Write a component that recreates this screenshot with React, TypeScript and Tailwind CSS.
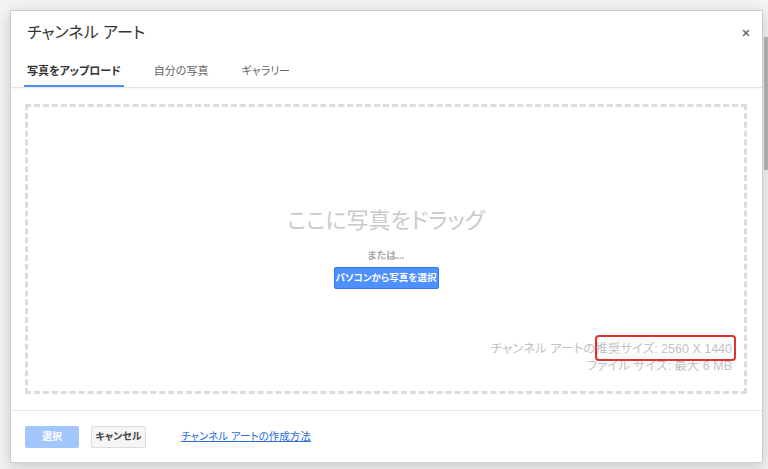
import { X } from "lucide-react";

const font = "font-['Liberation_Sans','Noto_Sans_CJK_JP',sans-serif] [font-feature-settings:'palt']";

export default function App() {
  return (
    <div className={`flex h-[469px] w-[768px] overflow-hidden bg-[#f3f3f3] ${font}`}>
      <div className="ml-[10px] mt-[10px] flex h-[453px] w-[754px] flex-col border border-[#cfcfcf] bg-white shadow-[0_4px_14px_rgba(0,0,0,0.18)]">
        {/* header */}
        <div className="border-b border-[#e5e5e5] shadow-[0_1px_3px_rgba(0,0,0,0.06)]">
          <div className="flex items-center justify-between pl-[16px] pr-[11px] pt-[12px]">
            <h1 className="text-[16px] leading-[20px] text-[#333]">チャンネル アート</h1>
            <X className="h-[10px] w-[10px] text-[#666]" strokeWidth={3.5} />
          </div>
          <div className="mt-[20px] flex gap-[27px] pl-[13px] text-[11px] leading-[16px]">
            <div className="border-b-2 border-[#4d8ff4] px-[3px] pb-[6px] font-bold text-[#333]">写真をアップロード</div>
            <div className="px-[3px] pb-[6px] text-[#666]">自分の写真</div>
            <div className="px-[3px] pb-[6px] text-[#666]">ギャラリー</div>
          </div>
        </div>

        {/* drop area */}
        <div className="flex-1 pb-[16px] pl-[14px] pr-[15px] pt-[16px]">
          <div className="flex h-full flex-col items-center border-[3px] border-dashed border-[#dcdcdc] pt-[99px]">
            <div className="text-[22px] leading-[29px] text-[#cacaca]">ここに写真をドラッグ</div>
            <div className="mt-[14px] text-[10px] font-bold leading-[14px] text-[#a8a8a8]">または...</div>
            <button className="mt-[4px] h-[22px] w-[105px] whitespace-nowrap rounded-[2px] border border-[#3079ed] bg-[#4d90fe] px-0 text-[9.5px] font-bold text-white">
              パソコンから写真を選択
            </button>
            <div className="mt-[52px] self-end pr-[12px] text-right text-[12.5px] leading-[17px] text-[#c2c2c2]">
              <div className="relative">
                チャンネル アートの推奨サイズ: 2560 X 1440
                <span className="absolute right-[-4px] top-[-6px] h-[26px] w-[141px] rounded-[4px] border-2 border-[#e0302e]" />
              </div>
              <div>ファイル サイズ: 最大 6 MB</div>
            </div>
          </div>
        </div>

        {/* footer */}
        <div className="flex h-[52px] items-center border-t border-[#e8e8e8] pl-[14px] text-[10px]">
          <button className="h-[22px] w-[54px] rounded-[2px] bg-[#a3c6fd] font-bold text-white">選択</button>
          <button className="ml-[12px] h-[22px] w-[55px] rounded-[2px] border border-[#dcdcdc] bg-[#f5f5f5] font-semibold text-[#444]">
            キャンセル
          </button>
          <a className="ml-[35px] text-[10.5px] text-[#2a6cd6] underline">チャンネル アートの作成方法</a>
        </div>
      </div>
      <div className="ml-px mt-[37px] h-[133px] w-[4px] bg-[#a9a9a9]" />
    </div>
  );
}
